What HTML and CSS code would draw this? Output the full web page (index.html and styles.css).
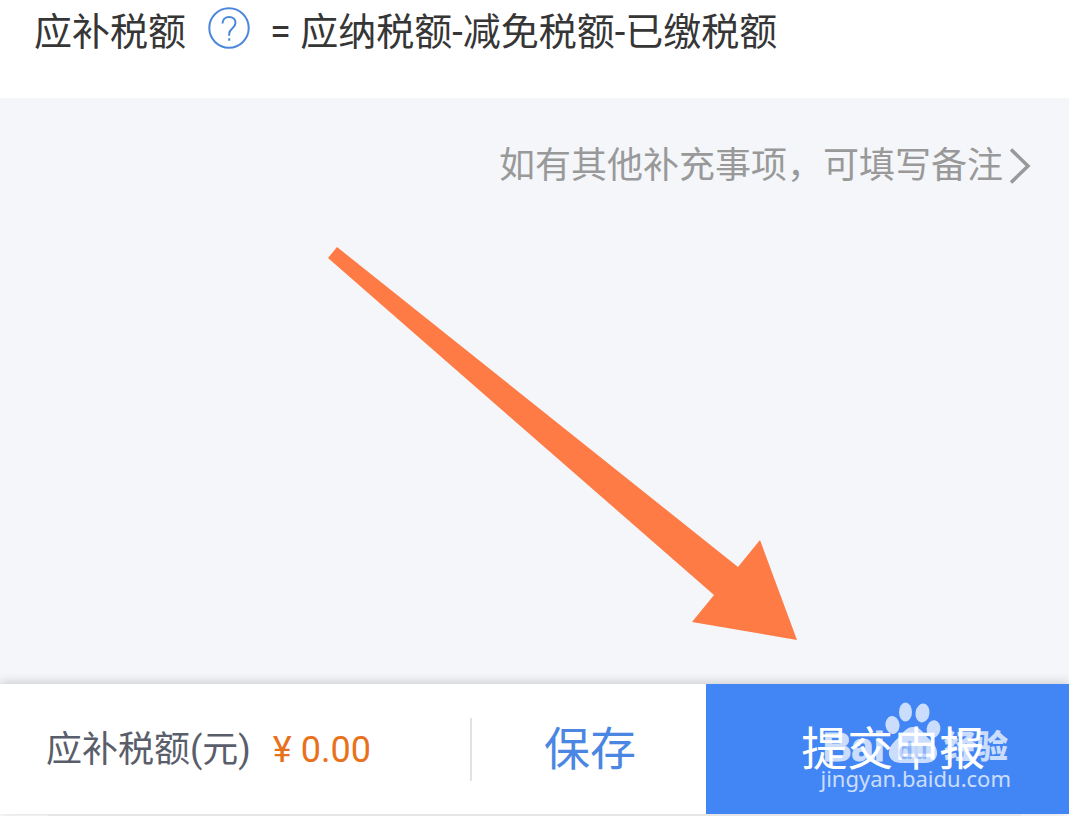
FILE: index.html
```html
<!DOCTYPE html>
<html lang="zh-CN">
<head>
    <meta charset="UTF-8">
    <meta name="viewport" content="width=device-width, initial-scale=1.0">
    <title>应补税额</title>
    <link rel="stylesheet" href="styles.css">
</head>
<body>
    <header class="formula">
        <span>应补税额</span>
        <button type="button" class="help" aria-label="应补税额说明">
            <svg viewBox="0 0 42 42">
                <circle cx="21" cy="21" r="19.7" />
                <path d="M14.5 16.5c0-4 2.8-6.6 6.6-6.6s6.4 2.5 6.4 6c0 5.4-6.3 5.6-6.3 10.6v2.3M21.2 31.2v2.6" />
            </svg>
        </button>
        <span>= 应纳税额-减免税额-已缴税额</span>
    </header>

    <main class="content">
        <a href="#" class="remark">
            如有其他补充事项，可填写备注
            <svg class="chevron" viewBox="0 0 22 38">
                <path d="M2 2.5 19 19 2 35.5" />
            </svg>
        </a>
        <svg class="arrow" viewBox="0 0 469 393">
            <polygon points="9,0 410,320 432,293 469,393 364,375 386,348 0,11" />
        </svg>
    </main>

    <footer class="bar">
        <div class="total">
            <span>应补税额(元)</span>
            <span class="amount">¥ 0.00</span>
        </div>
        <button type="button" class="save">保存</button>
        <div class="submit-box">
            <button type="button" class="submit">提交申报</button>
            <div class="watermark">
                <div class="brand">
                    <span class="brand-bai">Bai</span>
                    <svg class="paw" viewBox="0 0 56 62">
                        <ellipse cx="7.5" cy="23" rx="7" ry="9" transform="rotate(-8 7.5 23)" />
                        <ellipse cx="20.5" cy="10" rx="6.5" ry="9.5" />
                        <ellipse cx="37.5" cy="11" rx="7" ry="9.5" transform="rotate(8 37.5 11)" />
                        <ellipse cx="48.5" cy="27" rx="6.8" ry="8.8" transform="rotate(8 48.5 27)" />
                        <path d="M28 25c-7 0-10 6-15 11S3 45 4 53c2 7 8 8 14 8h20c7 0 12-1 14-8 1-8-4-12-9-17s-7-11-15-11z" />
                        <text x="28" y="57" text-anchor="middle">du</text>
                    </svg>
                    <span class="brand-name">经验</span>
                </div>
                <div class="site">jingyan.baidu.com</div>
            </div>
        </div>
    </footer>
    <hr class="line">
</body>
</html>
```
FILE: styles.css
```css
* {
    box-sizing: border-box;
}

body {
    display: flex;
    flex-direction: column;
    min-height: 100vh;
    margin: 0;
    background-color: #fff;
    color: #363636;
    font-family: Roboto, "Noto Sans CJK SC", sans-serif;
}

button {
    border: none;
    padding: 0;
    background: none;
    font-family: inherit;
    cursor: pointer;
}

.formula {
    display: flex;
    align-items: center;
    height: 98px;
    padding: 0 34px 42px;
    font-size: 38px;
    white-space: nowrap;
}

.help {
    width: 42px;
    height: 42px;
    margin: 0 20px 0 22px;
}

.help svg {
    display: block;
    fill: none;
    stroke: #4a86dc;
    stroke-width: 2;
}

.content {
    position: relative;
    flex: 1;
    padding: 40px 38px;
    background-color: #f4f6fa;
}

.remark {
    display: flex;
    justify-content: flex-end;
    align-items: center;
    gap: 6px;
    color: #999;
    font-size: 36px;
    line-height: 56px;
    text-decoration: none;
}

.chevron {
    width: 22px;
    height: 38px;
    fill: none;
    stroke: #999;
    stroke-width: 3.5;
}

.arrow {
    position: absolute;
    top: 149px;
    left: 328px;
    width: 469px;
    fill: #ff7b45;
}

.bar {
    position: relative;
    display: flex;
    height: 130px;
    background-color: #fff;
    box-shadow: 0 -1px 10px rgba(0, 0, 0, 0.2);
}

.total {
    display: flex;
    flex: 1;
    align-items: baseline;
    gap: 22px;
    padding-left: 46px;
    color: #5a5e6b;
    font-size: 36px;
    line-height: 132px;
    white-space: nowrap;
}

.amount {
    color: #e8721c;
}

.save {
    width: 22%;
    padding: 0 0 8px 4px;
    color: #4a86e2;
    font-size: 46px;
    background: linear-gradient(#e2e2e2, #e2e2e2) no-repeat left center / 2px 63px;
}

.submit-box {
    position: relative;
    width: 34%;
}

.submit {
    width: 100%;
    height: 100%;
    padding: 0 0 8px 12px;
    background-color: #4285f5;
    color: #fff;
    font-size: 46px;
}

/* logo laid over the submit button */
.watermark {
    position: absolute;
    top: 18px;
    right: 58px;
    color: #fff;
    opacity: 0.72;
    pointer-events: none;
}

.brand {
    display: flex;
    justify-content: flex-end;
    align-items: flex-end;
    height: 62px;
    white-space: nowrap;
}

.brand-bai {
    font: bold 40px/34px "Liberation Sans", sans-serif;
    -webkit-text-stroke: 1px #fff;
}

.paw {
    width: 56px;
    height: 62px;
    fill: #fff;
}

.paw text {
    fill: #a9c6fa;
    font: bold 24px "Liberation Sans", sans-serif;
}

.brand-name {
    margin: 0 3px;
    font-size: 32px;
    font-weight: 900;
    line-height: 34px;
}

.site {
    font: 22px/28px "Noto Sans", sans-serif;
}

.line {
    position: relative;
    width: calc(100% - 96px);
    height: 2px;
    margin: 0 auto;
    border: none;
    background-color: #e5e5e5;
}
```
